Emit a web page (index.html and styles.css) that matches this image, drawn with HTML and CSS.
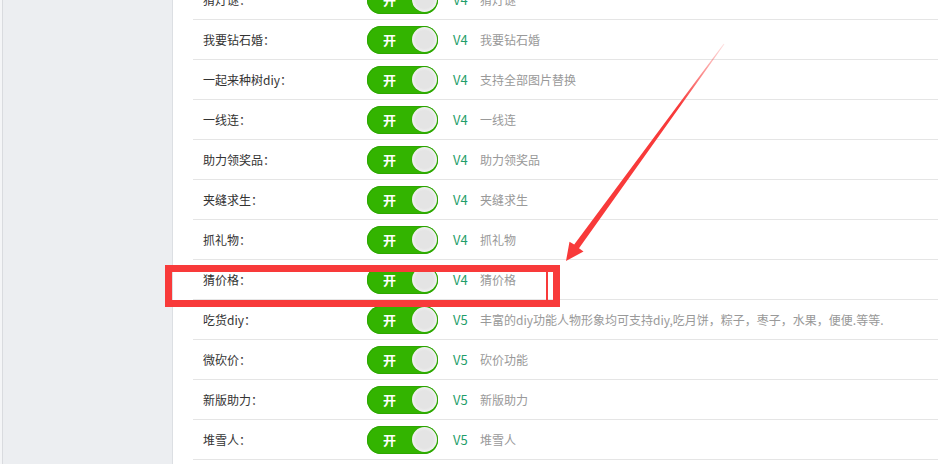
FILE: index.html
```html
<html>

<head>
    <title>功能开关</title>
    <link rel="stylesheet" href="styles.css">
</head>

<body>
    <div class="layout">
        <div class="sidebar"></div>
        <div class="main">
            <div class="list">
                <div class="row"><span class="label">猜灯谜：</span><span class="switch"><b>开</b><i class="knob"></i></span><span class="ver">V4</span><span class="desc">猜灯谜</span></div>
                <div class="row"><span class="label">我要钻石婚：</span><span class="switch"><b>开</b><i class="knob"></i></span><span class="ver">V4</span><span class="desc">我要钻石婚</span></div>
                <div class="row"><span class="label">一起来种树diy：</span><span class="switch"><b>开</b><i class="knob"></i></span><span class="ver">V4</span><span class="desc">支持全部图片替换</span></div>
                <div class="row"><span class="label">一线连：</span><span class="switch"><b>开</b><i class="knob"></i></span><span class="ver">V4</span><span class="desc">一线连</span></div>
                <div class="row"><span class="label">助力领奖品：</span><span class="switch"><b>开</b><i class="knob"></i></span><span class="ver">V4</span><span class="desc">助力领奖品</span></div>
                <div class="row"><span class="label">夹缝求生：</span><span class="switch"><b>开</b><i class="knob"></i></span><span class="ver">V4</span><span class="desc">夹缝求生</span></div>
                <div class="row"><span class="label">抓礼物：</span><span class="switch"><b>开</b><i class="knob"></i></span><span class="ver">V4</span><span class="desc">抓礼物</span></div>
                <div class="row"><span class="label">猜价格：</span><span class="switch"><b>开</b><i class="knob"></i></span><span class="ver">V4</span><span class="desc">猜价格</span></div>
                <div class="row"><span class="label">吃货diy：</span><span class="switch"><b>开</b><i class="knob"></i></span><span class="ver">V5</span><span class="desc">丰富的diy功能人物形象均可支持diy,吃月饼，粽子，枣子，水果，便便.等等.</span></div>
                <div class="row"><span class="label">微砍价：</span><span class="switch"><b>开</b><i class="knob"></i></span><span class="ver">V5</span><span class="desc">砍价功能</span></div>
                <div class="row"><span class="label">新版助力：</span><span class="switch"><b>开</b><i class="knob"></i></span><span class="ver">V5</span><span class="desc">新版助力</span></div>
                <div class="row"><span class="label">堆雪人：</span><span class="switch"><b>开</b><i class="knob"></i></span><span class="ver">V5</span><span class="desc">堆雪人</span></div>
                <div class="row"><span class="label">砸金蛋：</span><span class="switch"><b>开</b><i class="knob"></i></span><span class="ver">V5</span><span class="desc">砸金蛋</span></div>
            </div>
        </div>
    </div>

    <!-- annotation drawn over the screenshot -->
    <div class="markbox"><i class="markline"></i></div>
    <svg class="arrow" width="938" height="464" viewBox="0 0 938 464">
        <defs>
            <linearGradient id="fade" gradientUnits="userSpaceOnUse" x1="724" y1="44" x2="680" y2="105">
                <stop offset="0" stop-color="#f83a3a" stop-opacity="0.15" />
                <stop offset="1" stop-color="#f83a3a" stop-opacity="1" />
            </linearGradient>
        </defs>
        <polygon fill="url(#fade)" points="723.6,43.7 574.2,244.6 569.5,241.8 566,261 583.5,251.5 579,248.2 724.4,44.3" />
    </svg>
</body>

</html>
```

FILE: styles.css
```css
html, body {
    margin: 0;
    height: 100%;
    overflow: hidden;
}

body {
    background-color: #f4f5f7;
    font-family: "Microsoft YaHei", "Noto Sans CJK SC", sans-serif;
    font-size: 12px;
    position: relative;
}

.layout {
    display: flex;
    height: 100%;
}

.sidebar {
    width: 169px;
    margin-left: 2px;
    border-left: 1px solid #d9dbdf;
    border-right: 1px solid #dcdfe3;
    background-color: #eceef1;
}

.main {
    flex: 1;
    background-color: #fff;
    padding-left: 20px;
}

.list {
    margin-top: -20px;
}

.row {
    display: flex;
    align-items: center;
    height: 39px;
    border-bottom: 1px solid #e5e5e5;
}

.label {
    width: 164px;
    padding-left: 10px;
    color: #333;
    line-height: 16px;
}

.switch {
    display: flex;
    align-items: center;
    justify-content: space-between;
    width: 71px;
    height: 28px;
    border-radius: 14px;
    background-color: #33b400;
    box-shadow: inset 0 0 0 1px #2ca700;
    box-sizing: border-box;
    padding: 0 1px 0 16px;
}

.switch b {
    color: #fff;
    font-size: 13px;
    line-height: 16px;
}

.knob {
    width: 25px;
    height: 25px;
    border-radius: 50%;
    background: radial-gradient(circle, #e4e4e4 50%, #f2f2f2 72%, #fff 90%);
    box-shadow: 0 0 1px rgba(0, 0, 0, 0.25);
}

.ver {
    width: 27px;
    margin-left: 15px;
    color: #1f9e6a;
    font-size: 13px;
    line-height: 16px;
}

.desc {
    color: #999;
    line-height: 16px;
    white-space: nowrap;
}

.markbox {
    position: absolute;
    left: 165px;
    top: 265px;
    width: 381px;
    height: 28px;
    border: 7px solid #f83a3a;
}

.markline {
    position: absolute;
    left: 374px;
    top: 0;
    width: 2px;
    height: 100%;
    background-color: #f83a3a;
}

.arrow {
    position: absolute;
    left: 0;
    top: 0;
}
```
